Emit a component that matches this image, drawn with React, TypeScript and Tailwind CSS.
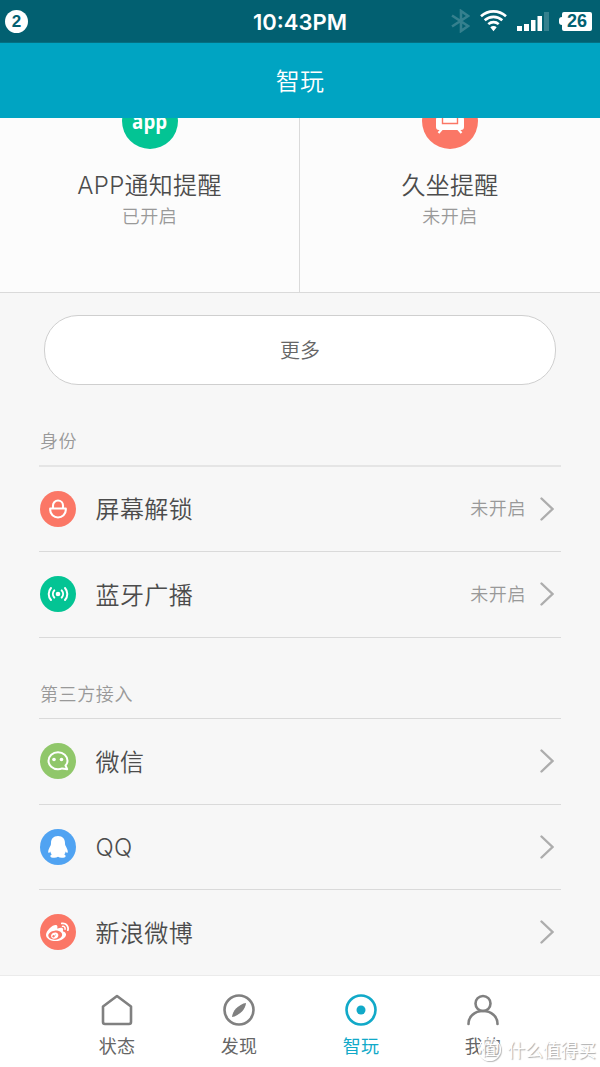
import React from 'react';
import clsx from 'clsx';
import { FaWeibo } from 'react-icons/fa';

interface SettingRowProps {
  icon: React.ReactNode;
  iconClass: string;
  label: string;
  status?: string;
  className?: string;
}

interface TabProps {
  icon: React.ReactNode;
  label: string;
  active?: boolean;
}

const StatusBar: React.FC = () => (
  <div className="relative flex h-[43px] shrink-0 items-center justify-between border-b border-[#046f82] bg-[#026071] px-[5px] text-white">
    <div className="flex h-[23px] w-[23px] items-center justify-center rounded-full bg-white pt-px text-[17px] font-bold text-[#026071]">
      2
    </div>
    <div className="absolute inset-x-0 top-[9px] text-center font-['Inter',sans-serif] text-[22px] leading-[27px] font-semibold">
      10:43PM
    </div>
    <div className="flex items-center">
      <svg className="mr-[10px] h-[24px] w-[20px] text-[#35808e]" viewBox="0 0 20 24" fill="none" stroke="currentColor" strokeWidth="2.6">
        <path d="M2 6.5 18 17 11 22V2l7 5L2 17.5" />
      </svg>
      <svg className="mr-[10px] h-[22px] w-[27px]" viewBox="0 0 27 22" fill="none" stroke="currentColor" strokeWidth="2.6">
        <path d="M1 6.3C8.2-.3 18.8-.3 26 6.3" />
        <path d="M4.7 10.3c5-4.6 12.6-4.6 17.6 0" />
        <path d="M8.3 14.1c3-2.7 7.4-2.7 10.4 0" />
        <path d="m10.3 17.3 3.2 3.9 3.2-3.9c-1.9-1.6-4.5-1.6-6.4 0Z" fill="currentColor" stroke="none" />
      </svg>
      <svg className="mr-[10px] h-[20px] w-[32px]" viewBox="0 0 32 20" fill="currentColor">
        <rect x="0" y="15" width="5" height="5" />
        <rect x="7" y="13" width="5" height="7" />
        <rect x="14" y="9" width="4.5" height="11" />
        <rect x="20.5" y="5" width="4.5" height="15" />
        <rect x="27" y="1" width="5" height="19" fill="#35808e" />
      </svg>
      <div className="mr-[3px] flex items-center">
        <div className="h-[8px] w-[3px] rounded-l-sm bg-white" />
        <div className="flex h-[19px] w-[30px] items-center justify-center rounded-[2px] bg-white pt-px text-[18px] font-bold text-[#026071]">
          26
        </div>
      </div>
    </div>
  </div>
);

const FeatureCard: React.FC<{ icon: React.ReactNode; iconClass: string; title: string; status: string }> = ({
  icon,
  iconClass,
  title,
  status
}) => (
  <div className="flex flex-col items-center">
    <div className={clsx('-mt-[25px] flex h-[56px] w-[56px] shrink-0 items-center justify-center rounded-full text-white', iconClass)}>
      {icon}
    </div>
    <div className="mt-[19px] text-[24px] leading-[36px] tracking-[0.3px] text-[#4c4c4c]">{title}</div>
    <div className="text-[18px] leading-[26px] tracking-[0.5px] text-[#999]">{status}</div>
  </div>
);

const SettingRow: React.FC<SettingRowProps> = ({ icon, iconClass, label, status, className }) => (
  <div className={clsx('flex items-center border-[#dadada] pr-[7px] pb-px pl-[0.5px]', className)}>
    <div className={clsx('flex h-[36px] w-[36px] items-center justify-center rounded-full text-white', iconClass)}>
      {icon}
    </div>
    <div className="ml-[20px] flex-1 pt-[3px] text-[24px] leading-[36px] tracking-[0.4px] text-[#4c4c4c]">{label}</div>
    {status && <div className="mr-[14px] pt-px text-[18px] leading-[26px] tracking-[0.6px] text-[#999]">{status}</div>}
    <svg className="h-[24px] w-[14px] text-[#adadad]" viewBox="0 0 14 24" fill="none" stroke="currentColor" strokeWidth="2.4" strokeLinecap="round">
      <path d="m1.5 1.5 11 10.5-11 10.5" />
    </svg>
  </div>
);

const Tab: React.FC<TabProps> = ({ icon, label, active }) => (
  <div className={clsx('flex w-[122px] flex-col items-center pt-[17px]', active ? 'text-[#11a9c8]' : 'text-[#808080]')}>
    <svg className="h-[34px] w-[34px]" viewBox="0 0 34 34" fill="none" stroke="currentColor" strokeWidth="2.6">
      {icon}
    </svg>
    <div className={clsx('mt-[7px] text-[18px] leading-[26px] tracking-[0.3px]', !active && 'text-[#666]')}>{label}</div>
  </div>
);

const LockIcon = (
  <svg className="h-[20px] w-[18px]" viewBox="0 0 18 20" fill="none" stroke="currentColor" strokeWidth="2.1">
    <path d="M4 9V6.5a5 5 0 0 1 10 0V9M1.2 9.500h15.600v1.500a7.800 7.500 0 0 1-15.600 0Z" strokeLinejoin="round" />
  </svg>
);

const BroadcastIcon = (
  <svg className="h-[16px] w-[22px]" viewBox="0 0 22 16" fill="none" stroke="currentColor" strokeWidth="2" strokeLinecap="round">
    <circle cx="11" cy="8" r="2.3" fill="currentColor" stroke="none" />
    <path d="M7.3 4.4a5.4 5.4 0 0 0 0 7.2M14.700 4.400a5.400 5.400 0 0 1 0 7.200M4 2a9 9 0 0 0 0 12M18 2a9 9 0 0 1 0 12" />
  </svg>
);

const WechatIcon = (
  <svg className="h-[20px] w-[22px]" viewBox="0 0 22 20" fill="none" stroke="currentColor" strokeWidth="2" strokeLinejoin="round">
    <path d="M18.5 14.5C20 13 20.5 11.5 20.5 9.7 20.5 5 16.3 1.2 11 1.2S1.5 5 1.5 9.7 5.7 18.2 11 18.2c1.5 0 3-.3 4.2-.8l5 .8Z" />
    <circle cx="7" cy="8.5" r="1.8" fill="currentColor" stroke="none" />
    <circle cx="14.5" cy="8.5" r="1.8" fill="currentColor" stroke="none" />
  </svg>
);

const QqIcon = (
  <svg className="h-[22px] w-[20px]" viewBox="0 0 20 22" fill="currentColor">
    <path d="M10 0c4.7 0 7 3 7 7.1 0 .8 0 1.6.4 2.4.8 1.6 2.4 4.2 2.4 6.1 0 1.3-.7 1.7-1.4.8l-.7-.8c-.2 1.2-.7 2.2-1.5 3 1 .4 1.4.9 1.4 1.6 0 1.1-1.7 1.5-3.9 1.5-1.5 0-2.7-.4-3.7-1-1 .6-2.2 1-3.7 1-2.2 0-3.900-.4-3.900-1.500 0-.7.4-1.2 1.4-1.6-.8-.8-1.3-1.8-1.5-3l-.7.8c-.7.9-1.4.5-1.4-.8 0-1.9 1.6-4.5 2.4-6.1.4-.8.4-1.6.4-2.4C3 3 5.300 0 10 0Z" />
  </svg>
);

// chair seen from the front, only the lower part shows under the header
const ChairIcon = (
  <svg className="h-[34px] w-[30px]" viewBox="0 0 30 34" fill="currentColor">
    <path d="M6 6h18v17H6Z" />
    <path d="M3 13h4v9h16v-9h4a2 2 0 0 1 2 2v8a3 3 0 0 1-3 3H4a3 3 0 0 1-3-3v-8a2 2 0 0 1 2-2Z" />
    <path d="M7.5 10v9.5h15V10" fill="none" stroke="#fb7766" strokeWidth="1.4" />
    <path d="m7 25-3.500 4M23 25l3.500 4" stroke="currentColor" strokeWidth="2.2" />
  </svg>
);

const App: React.FC = () => {
  return (
    <div className="relative flex h-[1067px] w-[600px] flex-col overflow-hidden bg-[#f7f7f7] font-['Liberation_Sans','Noto_Sans_CJK_SC',sans-serif]">
      <StatusBar />
      <header className="z-10 flex h-[75px] shrink-0 items-center justify-center bg-[#00a4c2] pt-[2px] text-[24px] font-[350] tracking-[0.3px] text-white">
        智玩
      </header>

      <main className="flex shrink-0 flex-col font-['Inter','Noto_Sans_CJK_SC',sans-serif] font-[350]">
        <section className="grid h-[175px] shrink-0 grid-cols-2 divide-x divide-[#dadada] border-b border-[#dadada] bg-[#fcfcfc]">
          <FeatureCard
            icon={<span className="-mt-[3px] scale-x-85 font-['Open_Sans',sans-serif] text-[22px] leading-none font-bold">app</span>}
            iconClass="bg-[#03c494]"
            title="APP通知提醒"
            status="已开启"
          />
          <FeatureCard icon={ChairIcon} iconClass="bg-[#fb7766]" title="久坐提醒" status="未开启" />
        </section>

        <button className="mx-[44px] mt-[22px] h-[70px] shrink-0 rounded-[34px] border border-[#cfcfcf] bg-white pt-[2px] text-[20px] text-[#666]">
          更多
        </button>

        <section className="mx-[39px] shrink-0">
          <h2 className="h-[82px] border-b-2 border-[#e5e5e5] pt-[43px] pl-px text-[18px] leading-[27px] tracking-[0.6px] text-[#999]">身份</h2>
          <SettingRow icon={LockIcon} iconClass="bg-[#fb7766]" label="屏幕解锁" status="未开启" className="h-[85px] border-b" />
          <SettingRow icon={BroadcastIcon} iconClass="bg-[#03c494]" label="蓝牙广播" status="未开启" className="h-[86px] border-b" />
        </section>

        <section className="mx-[39px] shrink-0">
          <h2 className="h-[81px] border-b border-[#dadada] pt-[43px] pl-px text-[18px] leading-[27px] tracking-[0.6px] text-[#999]">第三方接入</h2>
          <SettingRow icon={WechatIcon} iconClass="bg-[#90c76a]" label="微信" className="h-[86px] border-b" />
          <SettingRow icon={QqIcon} iconClass="bg-[#50a3f2]" label="QQ" className="h-[85px] border-b" />
          <SettingRow icon={<FaWeibo className="h-[23px] w-[23px]" />} iconClass="bg-[#fb7766]" label="新浪微博" className="h-[85px]" />
        </section>
      </main>

      <nav className="flex h-[92px] shrink-0 justify-center border-t border-[#ebebeb] bg-white">
        <Tab icon={<path d="M17 3 31 13.5V29a2 2 0 0 1-2 2H5a2 2 0 0 1-2-2V13.5Z" strokeLinejoin="round" />} label="状态" />
        <Tab
          icon={
            <>
              <circle cx="17" cy="17" r="14.5" />
              <path d="M24 10c0 2.500-2 6.500-4 8.500s-7 5.500-10 5.500c0-2.500 2-6.500 4-8.500s7-5.500 10-5.500Z" fill="currentColor" stroke="none" />
            </>
          }
          label="发现"
        />
        <Tab
          icon={
            <>
              <circle cx="17" cy="17" r="14.5" />
              <circle cx="17" cy="17" r="4.5" fill="currentColor" stroke="none" />
            </>
          }
          label="智玩"
          active
        />
        <Tab
          icon={
            <>
              <circle cx="17" cy="10.5" r="7.5" />
              <path d="M2.5 31c0-7.500 6-13 14.500-13s14.500 5.500 14.500 13" strokeLinecap="round" />
            </>
          }
          label="我的"
        />
      </nav>

      {/* watermark over the tab bar */}
      <div className="absolute right-[4px] bottom-[5px] flex items-center font-['Noto_Sans_CJK_SC',sans-serif] text-white [text-shadow:1px_1px_1px_#aaa]">
        <div className="mr-[7px] flex h-[23px] w-[23px] items-center justify-center rounded-full border border-white bg-white/50 text-[15px] shadow-[1px_1px_1px_#bbb]">
          值
        </div>
        <span className="text-[17.7px] leading-[26px]">什么值得买</span>
      </div>
    </div>
  );
};

export default App;
